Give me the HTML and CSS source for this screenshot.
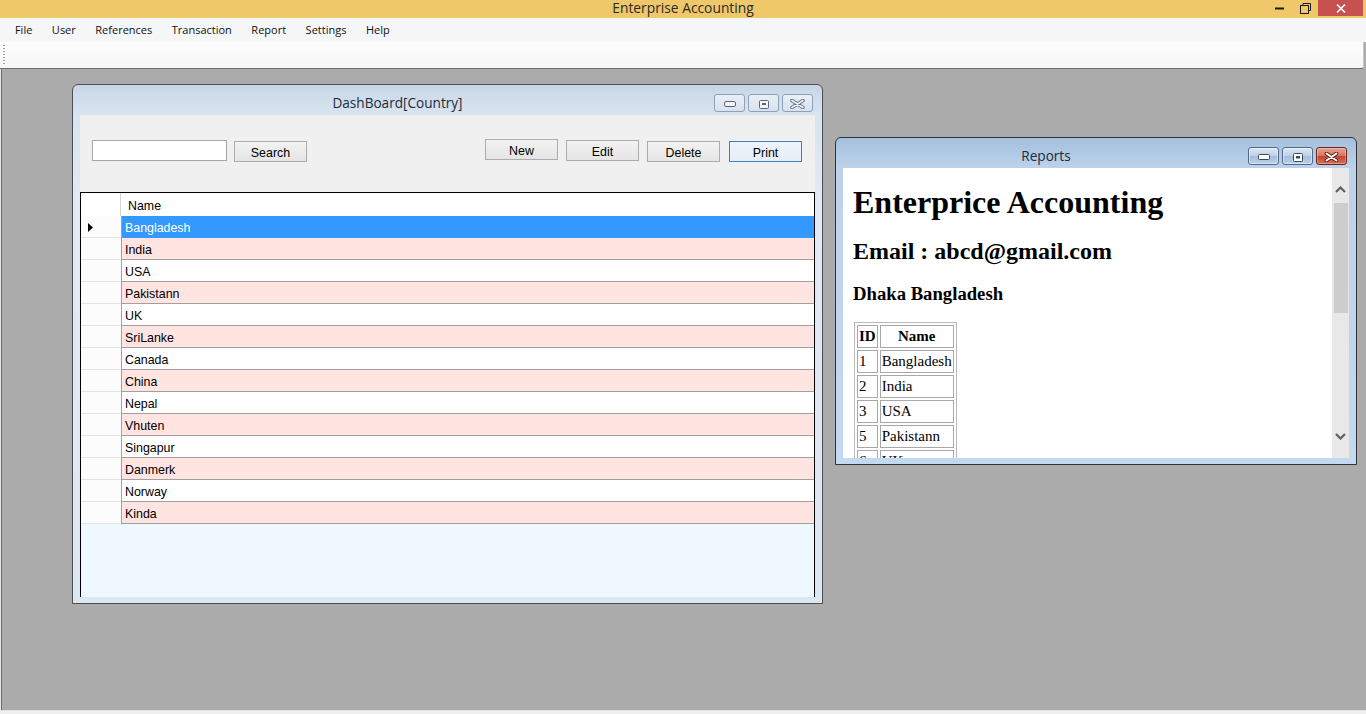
FILE: index.html
```html
<!DOCTYPE html>
<html>
<head>
<meta charset="utf-8">
<title>Enterprise Accounting</title>
<link rel="stylesheet" href="styles.css">
</head>
<body>
<div class="app">
  <header class="app-title">
    <span class="app-title-text">Enterprise Accounting</span>
    <div class="app-controls">
      <span class="ac"><svg width="9" height="3" viewBox="0 0 9 3"><rect x="0" y="0.5" width="9" height="2" fill="#1a1a1a"/></svg></span>
      <span class="ac"><svg width="11" height="11" viewBox="0 0 11 11"><path d="M3 2.5 V0.5 H10.5 V7.5 H8.5" fill="none" stroke="#1a1a1a"/><rect x="0.5" y="2.5" width="8" height="8" fill="none" stroke="#1a1a1a"/></svg></span>
      <span class="ac ac-close"><svg width="10" height="9" viewBox="0 0 10 9"><path d="M1 0.5 L9 8.5 M9 0.5 L1 8.5" stroke="#fff" stroke-width="1.6"/></svg></span>
    </div>
  </header>

  <nav class="menubar">
    <span class="mi">File</span>
    <span class="mi">User</span>
    <span class="mi">References</span>
    <span class="mi">Transaction</span>
    <span class="mi">Report</span>
    <span class="mi">Settings</span>
    <span class="mi">Help</span>
  </nav>

  <div class="toolstrip"><span class="grip"></span></div>

  <main class="mdi">
    <section class="win win-dash">
      <div class="win-titlebar">
        <span class="win-title">DashBoard[Country]</span>
        <div class="win-btns">
          <span class="wb"><svg width="12" height="6" viewBox="0 0 12 6"><rect x="0.5" y="0.5" width="11" height="5" rx="1.5" fill="#f3f6fa" stroke="#5b6878"/></svg></span>
          <span class="wb"><svg width="10" height="9" viewBox="0 0 10 9"><rect x="0.5" y="0.5" width="9" height="8" rx="1" fill="#f3f6fa" stroke="#5b6878"/><rect x="3" y="3" width="4" height="2" fill="#5b6878"/></svg></span>
          <span class="wb"><svg width="15" height="10" viewBox="0 0 15 10"><path d="M2 1.5 L13 8.5 M13 1.5 L2 8.5" stroke="#66768a" stroke-width="3.6" stroke-linecap="round"/><path d="M2 1.5 L13 8.5 M13 1.5 L2 8.5" stroke="#eef2f7" stroke-width="1.6" stroke-linecap="round"/></svg></span>
        </div>
      </div>
      <div class="win-body">
        <div class="client dash-client">
          <div class="dash-tools">
            <input class="tb" type="text" value="">
            <button class="btn btn-search">Search</button>
            <button class="btn btn-new">New</button>
            <button class="btn btn-edit">Edit</button>
            <button class="btn btn-delete">Delete</button>
            <button class="btn btn-print">Print</button>
          </div>
          <div class="grid">
            <div class="grow grow-head">
              <div class="rh"></div>
              <div class="cell head-cell">Name</div>
            </div>
            <div class="grow sel">
              <div class="rh"><svg width="5" height="9" viewBox="0 0 5 9"><path d="M0 0 L5 4.5 L0 9 Z" fill="#000"/></svg></div>
              <div class="cell">Bangladesh</div>
            </div>
            <div class="grow alt"><div class="rh"></div><div class="cell">India</div></div>
            <div class="grow"><div class="rh"></div><div class="cell">USA</div></div>
            <div class="grow alt"><div class="rh"></div><div class="cell">Pakistann</div></div>
            <div class="grow"><div class="rh"></div><div class="cell">UK</div></div>
            <div class="grow alt"><div class="rh"></div><div class="cell">SriLanke</div></div>
            <div class="grow"><div class="rh"></div><div class="cell">Canada</div></div>
            <div class="grow alt"><div class="rh"></div><div class="cell">China</div></div>
            <div class="grow"><div class="rh"></div><div class="cell">Nepal</div></div>
            <div class="grow alt"><div class="rh"></div><div class="cell">Vhuten</div></div>
            <div class="grow"><div class="rh"></div><div class="cell">Singapur</div></div>
            <div class="grow alt"><div class="rh"></div><div class="cell">Danmerk</div></div>
            <div class="grow"><div class="rh"></div><div class="cell">Norway</div></div>
            <div class="grow alt"><div class="rh"></div><div class="cell">Kinda</div></div>
          </div>
        </div>
      </div>
    </section>

    <section class="win win-rep">
      <div class="win-titlebar">
        <span class="win-title">Reports</span>
        <div class="win-btns">
          <span class="wb wb-act"><svg width="12" height="6" viewBox="0 0 12 6"><rect x="0.5" y="0.5" width="11" height="5" rx="1" fill="#fff" stroke="#3a4a5e"/></svg></span>
          <span class="wb wb-act"><svg width="10" height="9" viewBox="0 0 10 9"><rect x="0.5" y="0.5" width="9" height="8" rx="1" fill="#fff" stroke="#3a4a5e"/><rect x="3" y="3" width="4" height="2.5" fill="#3a4a5e"/></svg></span>
          <span class="wb wb-close"><svg width="15" height="10" viewBox="0 0 15 10"><path d="M2.5 1.5 L12.5 8.5 M12.5 1.5 L2.5 8.5" stroke="#5a1f16" stroke-width="3.8" stroke-linecap="round"/><path d="M2.5 1.5 L12.5 8.5 M12.5 1.5 L2.5 8.5" stroke="#fff" stroke-width="2" stroke-linecap="round"/></svg></span>
        </div>
      </div>
      <div class="win-body">
        <div class="client rep-client">
          <div class="rep-content">
            <h1 class="rep-h1">Enterprice Accounting</h1>
            <h2 class="rep-h2">Email : abcd@gmail.com</h2>
            <h3 class="rep-h3">Dhaka Bangladesh</h3>
            <table class="rep-table">
              <tr><th>ID</th><th>Name</th></tr>
              <tr><td>1</td><td>Bangladesh</td></tr>
              <tr><td>2</td><td>India</td></tr>
              <tr><td>3</td><td>USA</td></tr>
              <tr><td>5</td><td>Pakistann</td></tr>
              <tr><td>6</td><td>UK</td></tr>
            </table>
          </div>
          <div class="vscroll">
            <div class="sb-arrow sb-up"><svg width="11" height="7" viewBox="0 0 11 7"><path d="M1 6 L5.5 1.5 L10 6" fill="none" stroke="#606060" stroke-width="2.2"/></svg></div>
            <div class="sb-track"><div class="sb-thumb"></div></div>
            <div class="sb-arrow sb-down"><svg width="11" height="7" viewBox="0 0 11 7"><path d="M1 1 L5.5 5.5 L10 1" fill="none" stroke="#606060" stroke-width="2.2"/></svg></div>
          </div>
        </div>
      </div>
    </section>
  </main>

  <div class="statusline"></div>
</div>
</body>
</html>
```
FILE: styles.css
```css
* { box-sizing: border-box; }

html, body {
  margin: 0;
  padding: 0;
}

body {
  width: 1366px;
  height: 714px;
  overflow: hidden;
  background: #ababab;
  font-family: "Open Sans", "Liberation Sans", sans-serif;
  color: #000;
}

.app {
  display: flex;
  flex-direction: column;
  height: 714px;
}

/* ---------- application title bar ---------- */
.app-title {
  flex: none;
  height: 18px;
  background: #efc86a;
  display: grid;
  grid-template-columns: 1fr auto 1fr;
  align-items: start;
}

.app-title-text {
  grid-column: 2;
  font-size: 13.8px;
  line-height: 16px;
  color: #2a2a2a;
  white-space: nowrap;
}

.app-controls {
  grid-column: 3;
  justify-self: end;
  display: flex;
  margin-right: 3px;
  height: 16px;
}

.ac {
  width: 26px;
  height: 16px;
  display: flex;
  align-items: center;
  justify-content: center;
}

.ac-close {
  width: 45px;
  background: #c75050;
}

/* ---------- menu ---------- */
.menubar {
  flex: none;
  height: 24px;
  background: #f5f6f7;
  display: flex;
  align-items: center;
  padding-left: 5.2px;
  font-size: 11px;
  line-height: 16px;
}

.mi {
  padding: 0 9.75px;
  color: #111;
}

/* ---------- tool strip ---------- */
.toolstrip {
  flex: none;
  height: 27px;
  background: linear-gradient(#fdfdfd, #f6f6f6);
  border-bottom: 1px solid #6a6a6a;
  border-right: 1px solid #c8c8c8;
  border-bottom-right-radius: 3px;
  margin-right: 2px;
  display: flex;
  align-items: center;
  padding-left: 3px;
}

.grip {
  width: 2px;
  height: 20px;
  background-image: linear-gradient(#9a9a9a 50%, transparent 50%);
  background-size: 2px 3px;
}

/* ---------- MDI area ---------- */
.mdi {
  flex: 1;
  position: relative;
  background: #ababab;
  box-shadow: inset 1px 0 0 #e9e9e9, inset 2px 0 0 #6b6b6b;
}

.statusline {
  flex: none;
  height: 4px;
  background: #f0f0f0;
  border-top: 1px solid #e0e0e0;
}

/* ---------- child windows ---------- */
.win {
  position: absolute;
  display: flex;
  flex-direction: column;
  border: 1px solid #4b4f55;
  border-radius: 6px 6px 0 0;
}

.win-dash {
  left: 72px;
  top: 15px;
  width: 751px;
  height: 520px;
  background: linear-gradient(to bottom, #c8d6e7 0, #d9e4f0 30px, #e2eaf4 120px, #dde7f2 100%);
}

.win-rep {
  left: 835px;
  top: 68px;
  width: 522px;
  height: 328px;
  border-color: #2e3136;
  background: linear-gradient(to bottom, #a4c0df 0, #bdd2ea 30px, #c3d9ef 100%);
}

.win-titlebar {
  flex: none;
  height: 30px;
  display: flex;
  align-items: flex-start;
  padding: 9px 9px 0 8px;
}

.win-title {
  flex: 1;
  text-align: center;
  font-size: 13.6px;
  line-height: 18px;
  color: #1e2a38;
  white-space: nowrap;
}

.win-btns {
  display: flex;
  gap: 3px;
}

.wb {
  width: 31px;
  height: 18px;
  border: 1px solid #8ea1b7;
  border-radius: 3px;
  background: linear-gradient(#e9eff6, #d8e2ee);
  display: flex;
  align-items: center;
  justify-content: center;
  padding-top: 2px;
}

.wb-act {
  border-color: #52698a;
  background: linear-gradient(#dce7f3 0, #bfd2e7 48%, #a6bedb 52%, #bcd1e9 100%);
  box-shadow: inset 0 0 0 1px rgba(255,255,255,0.45);
}

.wb-close {
  border-color: #6e2419;
  background: linear-gradient(#e9a595 0, #d57561 48%, #c24430 52%, #d6705b 100%);
  box-shadow: inset 0 0 0 1px rgba(255,255,255,0.3);
}

.win-body {
  flex: 1;
  display: flex;
  padding: 0 7px 6px 7px;
  min-height: 0;
}

.client {
  flex: 1;
  display: flex;
  min-width: 0;
  min-height: 0;
}

/* ---------- dashboard client ---------- */
.dash-client {
  flex-direction: column;
  background: #f0f0f0;
  font-family: "Liberation Sans", Arial, sans-serif;
  font-size: 12.4px;
}

.dash-tools {
  flex: none;
  height: 77px;
  display: flex;
  align-items: flex-start;
  padding: 24px 13px 0 12px;
}

.tb {
  width: 135px;
  height: 21px;
  margin: 1px 0 0 0;
  padding: 0 3px;
  border: 1px solid #a6a6a6;
  background: #fff;
  font: inherit;
}

.btn {
  width: 73px;
  height: 21px;
  padding: 3px 0 0 0;
  border: 1px solid #acacac;
  background: linear-gradient(#f2f2f2, #e5e5e5);
  font: inherit;
  line-height: 16px;
  color: #000;
  text-align: center;
}

.btn-search { margin: 2px 0 0 7px; }
.btn-new { margin: 0 0 0 auto; }
.btn-edit { margin: 1px 0 0 8px; }
.btn-delete { margin: 2px 0 0 8px; }
.btn-print {
  margin: 2px 0 0 9px;
  border-color: #3c7fc4;
  background: linear-gradient(#eef4fa, #e5eef7);
}

.grid {
  flex: 1;
  background: #f0f8ff;
  border: 1px solid #000;
  border-bottom: none;
}

.grow {
  display: flex;
  height: 22px;
}

.grow-head {
  height: 23px;
  background: #fff;
}

.rh {
  flex: none;
  width: 40px;
  background: #fcfcfc;
  border-bottom: 1px solid #e4e4e4;
  display: flex;
  align-items: center;
  padding: 1px 0 0 7px;
}

.grow-head .rh {
  background: #fff;
  border-bottom: none;
  border-right: 1px solid #d4d4d4;
}

.cell {
  flex: 1;
  background: #fff;
  border-left: 1px solid #a0a0a0;
  border-bottom: 1px solid #a0a0a0;
  padding: 3px 0 0 3px;
  line-height: 18px;
  white-space: nowrap;
}

.head-cell {
  border-left: none;
  border-bottom: none;
  padding: 3px 0 0 7px;
  line-height: 20px;
}

.grow.alt .cell { background: #ffe4e1; }

.grow.sel .cell {
  background: #3399ff;
  color: #fff;
  border-bottom-color: #3399ff;
}

/* ---------- report client ---------- */
.rep-client {
  background: #fff;
}

.rep-content {
  flex: 1;
  min-width: 0;
  overflow: hidden;
  padding: 16px 10px 0 10px;
  font-family: "Liberation Serif", "Times New Roman", serif;
  color: #000;
}

.rep-h1 {
  margin: 0;
  font-size: 32px;
  line-height: 37px;
  font-weight: bold;
  white-space: nowrap;
}

.rep-h2 {
  margin: 16px 0 0 0;
  font-size: 24px;
  line-height: 28px;
  font-weight: bold;
  white-space: nowrap;
}

.rep-h3 {
  margin: 18px 0 0 0;
  font-size: 18.7px;
  line-height: 22px;
  font-weight: bold;
}

.rep-table {
  margin: 17px 0 0 1px;
  border: 1px solid #b8b8b8;
  border-spacing: 2px;
  font-size: 15px;
}

.rep-table th,
.rep-table td {
  border: 1px solid #a8a8a8;
  padding: 1px 1px;
  line-height: 19px;
  text-align: left;
}

.rep-table th { text-align: center; }

.vscroll {
  flex: none;
  width: 17px;
  background: #e8e8e8;
  display: flex;
  flex-direction: column;
}

.sb-arrow {
  flex: none;
  height: 35px;
  display: flex;
  justify-content: center;
}

.sb-up { align-items: flex-start; padding-top: 18px; }
.sb-down { align-items: flex-start; padding-top: 10px; }

.sb-track {
  flex: 1;
  padding: 0 1px 0 2px;
}

.sb-thumb {
  height: 110px;
  background: #cdcdcd;
}
```
